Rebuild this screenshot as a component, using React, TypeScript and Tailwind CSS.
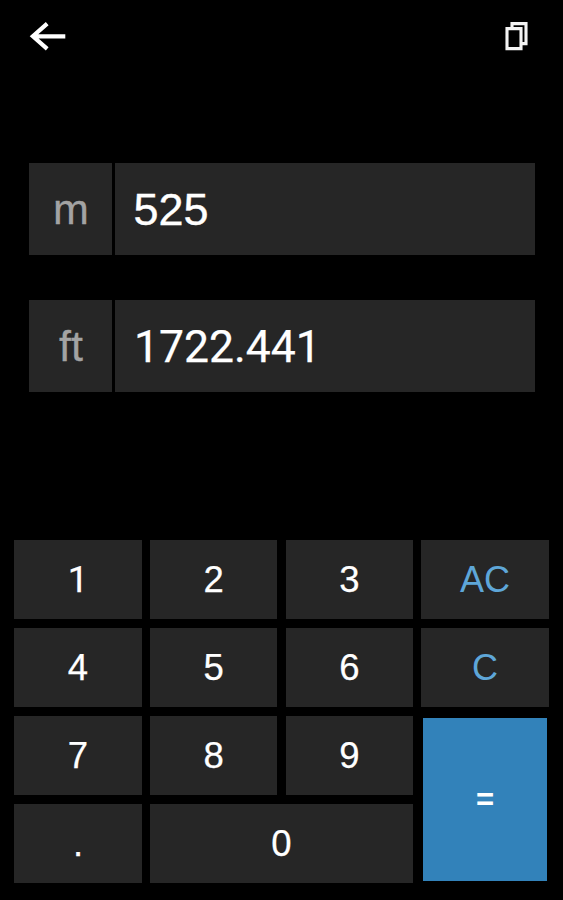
import React from "react";

type KeyDef = { label: string; className?: string };

const digit = "pt-[2px] text-[36.5px] text-white [-webkit-text-stroke:0.25px_currentColor]";
const action = "pt-px text-[36px] text-[#5ea6d8]";

const keys: KeyDef[] = [
  { label: "1", className: `${digit} font-[Roboto,sans-serif]` },
  { label: "2", className: digit },
  { label: "3", className: digit },
  { label: "AC", className: action },
  { label: "4", className: digit },
  { label: "5", className: digit },
  { label: "6", className: digit },
  { label: "C", className: action },
  { label: "7", className: digit },
  { label: "8", className: digit },
  { label: "9", className: digit },
  { label: "=", className: "row-span-2 mx-[1.5px] mt-[1.5px] mb-[2px] text-[31px] font-bold text-white" },
  { label: ".", className: digit },
  { label: "0", className: `${digit} col-span-2` },
];

function Key({ label, className = "" }: KeyDef) {
  const background = label === "=" ? "bg-[#3282ba]" : "bg-[#262626]";
  return (
    <button type="button" className={`flex items-center justify-center leading-none ${background} ${className}`}>
      {label}
    </button>
  );
}

function Field({ unit, value, font }: { unit: string; value: string; font: string }) {
  return (
    <div className="flex h-[92.5px] gap-[3.5px] leading-none">
      <div className="flex w-[83px] items-center justify-center bg-[#262626] pl-[2px] pt-[2px] text-[43px] text-[#a3a3a3] [-webkit-text-stroke:0.3px_currentColor]">
        {unit}
      </div>
      <div className={`flex flex-1 items-center bg-[#262626] text-white ${font}`}>
        {value}
      </div>
    </div>
  );
}

export default function App() {
  return (
    <main className="flex h-[900px] w-[563px] flex-col overflow-hidden bg-black font-['Liberation_Sans',Arial,sans-serif]">
      <header className="flex h-[72px] items-center justify-between pl-[28px] pr-[33px]">
        <button type="button" aria-label="Back">
          <svg className="block h-[32px] w-[40px]" viewBox="0 0 40 32" fill="none" stroke="#fff" strokeWidth="4.2">
            <path d="M19.2 3.6 4.9 16.3 19.2 28.8M4.9 16.3H37.3" />
          </svg>
        </button>
        <button type="button" aria-label="Copy">
          <svg className="block h-[32px] w-[28px]" viewBox="0 0 28 32" fill="none" stroke="#f4f4f4" strokeWidth="3.1">
            <path d="M5 8.6H19V28.6H5ZM10 8.6V3.6H24V23.6H19" />
          </svg>
        </button>
      </header>
      <section className="mt-[90.5px] flex flex-col gap-[44.5px] pl-[28.5px] pr-[28px]">
        <Field unit="m" value="525" font="pl-[18.5px] pt-px text-[45px] [-webkit-text-stroke:0.4px_currentColor]" />
        <Field unit="ft" value="1722.441" font="pl-[19px] pt-[3px] font-[Roboto,sans-serif] text-[44.5px] [-webkit-text-stroke:0.25px_currentColor]" />
      </section>
      <section className="mt-auto mb-[17px] grid grid-cols-4 grid-rows-[repeat(4,79px)] gap-x-[8.2px] gap-y-[9px] px-[14.3px]">
        {keys.map((key) => (
          <Key key={key.label} {...key} />
        ))}
      </section>
    </main>
  );
}
